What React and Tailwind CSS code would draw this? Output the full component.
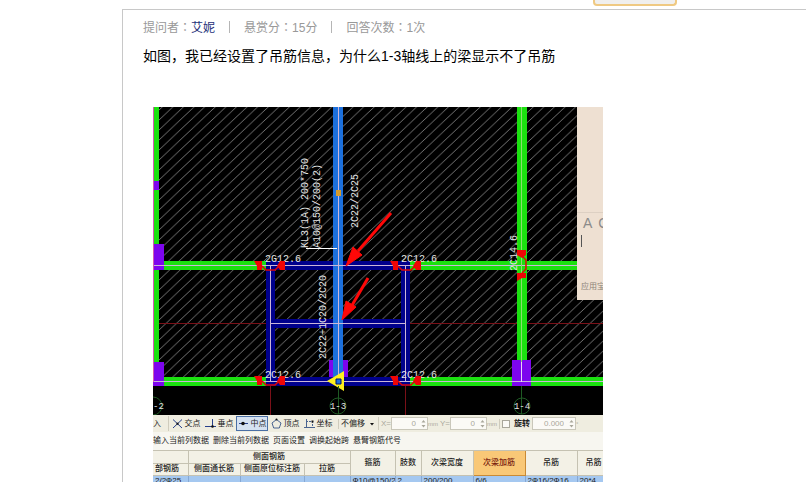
const columns = [
  { name: "箍筋", width: "w-[45px]" },
  { name: "肢数", width: "w-[26px]" },
  { name: "次梁宽度", width: "w-[52px]" },
  { name: "次梁加筋", width: "w-[52px]", active: true },
  { name: "吊筋", width: "w-[52px]" },
  { name: "吊筋", width: "w-[26px]", cut: true },
];

const row = ["2/2Ф25", "", "", "", "Ф10@150/2", "2", "200/200", "6/6", "2Ф16/2Ф16", "20*4"];

const menu = ["输入当前列数据", "删除当前列数据", "页面设置", "调换起始跨", "悬臂钢筋代号"];

const CrossIcon = () => (
  <svg className="size-[11px] shrink-0" viewBox="0 0 11 11" fill="none" stroke="#27408b">
    <path d="M1 1.5 10 10M10 1.5 1 10" />
    <path d="M4.5 5.7h2" stroke="#111" strokeWidth="2" />
  </svg>
);

const PerpIcon = () => (
  <svg className="size-[11px] shrink-0" viewBox="0 0 11 11" fill="none" stroke="#27408b">
    <path d="M0 8.5h11M7.5 1v7" />
    <circle cx="7.5" cy="8.5" r="1.3" fill="#111" stroke="none" />
  </svg>
);

const MidIcon = () => (
  <svg className="size-[11px] shrink-0" viewBox="0 0 11 11" fill="none" stroke="#27408b">
    <path d="M1 5.5h9" />
    <circle cx="5" cy="5.5" r="1.8" fill="#111" stroke="none" />
  </svg>
);

const VertexIcon = () => (
  <svg className="size-[11px] shrink-0" viewBox="0 0 11 11" fill="none" stroke="#4a6490">
    <path d="M5.5 1.5 10 5 8.3 10H2.7L1 5z" />
    <circle cx="5.5" cy="1.5" r="1" fill="#111" stroke="none" />
  </svg>
);

const CoordIcon = () => (
  <svg className="size-[11px] shrink-0" viewBox="0 0 11 11" fill="none" stroke="#4a6490">
    <path d="M2.5 1v9M0 9.5h11" />
    <path d="M2 3.5h6.5V10" strokeDasharray="2 1" />
    <path d="M7.5 3.5h2" stroke="#111" strokeWidth="2" />
  </svg>
);

const snaps = [
  { name: "交点", Icon: CrossIcon },
  { name: "垂点", Icon: PerpIcon },
  { name: "中点", Icon: MidIcon, active: true },
  { name: "顶点", Icon: VertexIcon },
  { name: "坐标", Icon: CoordIcon },
];

// hanging bar mark, drawn around the crossing point of two beams
const Hanger = ({ x, y, rotate = 0 }) => (
  <g transform={`translate(${x} ${y}) rotate(${rotate})`} fill="#f00505">
    <path d="M-16-5h8v9h-5V0z" />
    <path d="M7 0 10-5h5v9h-5z" />
    <path d="M-8 0-4 4H5L9 0" fill="none" stroke="#e00505" strokeWidth="1.5" />
  </g>
);

const Drawing = () => (
  <svg
    className="block w-full"
    viewBox="153 107 450 308"
    fontFamily="'Liberation Mono', monospace"
    fontSize="10"
    fill="#e4e4e4"
    role="img"
    aria-label="梁平面图"
  >
    <defs>
      <pattern id="hatch" width="10.6" height="10" patternUnits="userSpaceOnUse">
        <path d="M0 10 10.6 0M-1.06 1 1.06-1M9.54 11l2.12-2" stroke="#8c8c8c" strokeWidth="0.8" />
      </pattern>
    </defs>
    <path d="M153 107h450v308H153z" fill="#000" />
    <path d="M159 107h444v270H159z" fill="url(#hatch)" />
    <path d="M153 323.5h450M270.5 380v35M405.5 380v35" stroke="#7a1018" />

    {/* green beams */}
    <g fill="#1be010">
      <path d="M153 107h6v279h-6z" />
      <path d="M517 107h10v279h-10z" />
      <path d="M153 261h113v9H153zM410 261h193v9H410z" />
      <path d="M153 377h113v9H153zM410 377h193v9H410z" />
    </g>

    {/* secondary beams */}
    <g fill="#00008c">
      <path d="M266 261h144v9H266zM266 377h144v9H266zM266 319h144v9H266z" />
      <path d="M266 261h9v125h-9zM401 261h9v125h-9z" />
    </g>

    {/* columns */}
    <g fill="#7d05ee">
      <path d="M153 181h6v9h-6zM153 244h11v26h-11zM153 362h11v24h-11z" />
      <path d="M329 360h19v17h-19zM512 360h19v26h-19z" />
    </g>

    <path d="M333 107h10v270h-10z" fill="#1c70dc" />
    <g stroke="#cbb6d8" fill="none">
      <path d="M153 265.5h450M153 381.5h450M270 323.5h136" />
      <path d="M270.5 266v116M405.5 266v116M338.5 107v276" />
      <path d="M521.5 107v275" stroke="#8edb70" />
      <path d="M153.5 107v275" stroke="#d25ab0" />
    </g>
    <path d="M521.5 362v20" stroke="#e9d3f5" />
    <path d="M336 190h5v6h-5z" fill="#d39a2c" />
    <path d="M306 248.5h31" stroke="#fff" />

    <text x="265" y="262">2G12.6</text>
    <text x="401" y="262">2C12.6</text>
    <text x="265" y="378">2C12.6</text>
    <text x="401" y="378">2C12.6</text>
    <text transform="translate(308 248) rotate(-90)">KL3(1A) 200*750</text>
    <text transform="translate(320 248) rotate(-90)">A10@150/200(2)</text>
    <text transform="translate(358 228) rotate(-90)">2C22/2C25</text>
    <text transform="translate(326 359) rotate(-90)">2C22+1C20/2C20</text>
    <text transform="translate(517 271) rotate(-90)">2C14.6</text>

    <Hanger x={270} y={266} />
    <Hanger x={406} y={266} />
    <Hanger x={270} y={381} />
    <Hanger x={406} y={381} />
    <Hanger x={522} y={265} rotate={-90} />

    {/* pointers to the missing hangers */}
    <g fill="#ff0808" stroke="#ff0808">
      <path d="M391 213 358 251" strokeWidth="3" />
      <path d="M346 266 353 247 362 255z" />
      <path d="M368 278 351 307" strokeWidth="3" />
      <path d="M342 320 346 301 356 307z" />
    </g>

    <path d="M327 381 344 371v20z" fill="#fff01e" />
    <path d="M336 379h5v5h-5z" fill="#1c70dc" stroke="#00106b" />

    {/* axis bubbles */}
    <g fill="none" stroke="#1f5a24">
      <circle cx="153" cy="406" r="9" />
      <circle cx="338" cy="406" r="8" />
      <circle cx="522" cy="406" r="8" />
      <path d="M338.5 386v28M521.5 386v28" />
    </g>
    <text x="153" y="409" fontSize="9">-2</text>
    <text x="338" y="409" fontSize="9" textAnchor="middle">1-3</text>
    <text x="522" y="409" fontSize="9" textAnchor="middle">1-4</text>
  </svg>
);

const NumberBox = ({ id, label, value, unit, width }) => (
  <div className="flex items-center">
    <label htmlFor={id}>{label}</label>
    <div className={`flex h-[13px] items-center border border-[#c9c7ba] bg-[#fbfaf6] ${width}`}>
      <input id={id} defaultValue={value} className="w-full min-w-0 bg-transparent pr-1 text-right outline-none" />
      <svg className="h-[11px] w-[7px] shrink-0" viewBox="0 0 7 11" fill="#a9a79b">
        <path d="M3.5 2 5.5 4.5h-4zM3.5 9.5 1.5 7h4z" />
      </svg>
    </div>
    <span className="text-[6px]">{unit}</span>
  </div>
);

const Toolbar = () => (
  <div className="flex h-[17px] items-center overflow-hidden bg-[#efede0] whitespace-nowrap">
    <span className="w-[15px]">入</span>
    <div className="flex gap-px border-l border-[#cfccbd] pl-px">
      {snaps.map(({ name, Icon, active }) => (
        <button
          key={name}
          type="button"
          className={`flex h-[15px] w-8 items-center justify-center gap-0.5 ${
            active ? "border border-[#4a6fa5] bg-[#d5e2f2]" : ""
          }`}
        >
          <Icon />
          {name}
        </button>
      ))}
    </div>
    <div className="relative ml-1 flex w-[38px] items-center border-l border-[#cfccbd]">
      <select aria-label="偏移" className="w-full appearance-none bg-transparent pl-0.5 outline-none">
        <option>不偏移</option>
      </select>
      <svg className="pointer-events-none absolute right-0.5 size-1" viewBox="0 0 4 4">
        <path d="M0 1h4L2 3.5z" fill="#111" />
      </svg>
    </div>
    <div className="ml-0.5 flex gap-0.5 border-l border-[#cfccbd] pl-0.5 text-[#aaa89c]">
      <NumberBox id="offset-x" label="X=" value="0" unit="mm" width="w-[37px]" />
      <NumberBox id="offset-y" label="Y=" value="0" unit="mm" width="w-[37px]" />
    </div>
    <div className="ml-0.5 flex items-center border-l border-[#cfccbd] pl-0.5">
      <input id="rotate" type="checkbox" className="mr-1 size-2 appearance-none border border-[#a9a79b] bg-[#fbfaf6]" />
      <label htmlFor="rotate" className="font-bold">旋转</label>
    </div>
    <div className="ml-0.5 text-[#aaa89c]">
      <NumberBox id="angle" label="" value="0.000" unit="°" width="w-[44px]" />
    </div>
  </div>
);

const BeamTable = () => (
  <table className="w-full table-fixed border-collapse whitespace-nowrap">
    <colgroup>
      <col className="w-[35px]" />
      <col className="w-[52px]" />
      <col className="w-[64px]" />
      <col className="w-[46px]" />
      {columns.map((col, index) => (
        <col key={index} className={col.width} />
      ))}
    </colgroup>
    <thead className="bg-[#f3f1e6]">
      <tr className="h-3">
        <th className="border-r border-b border-[#c5c2b2] p-0" />
        <th colSpan={3} className="border-r border-b border-[#c5c2b2] p-0 font-medium">侧面钢筋</th>
        {columns.map((col, index) => (
          <th
            key={index}
            rowSpan={2}
            className={`overflow-hidden border-b p-0 font-medium ${
              col.active ? "border-[#c98a35] bg-[#f9c877] text-[#7a1c10]" : "border-[#c5c2b2]"
            } ${col.cut ? "pl-2 text-left" : "border-r"}`}
          >
            {col.name}
          </th>
        ))}
      </tr>
      <tr className="h-3">
        <th className="border-r border-b border-[#c5c2b2] p-0 pl-0.5 text-left font-medium">部钢筋</th>
        <th className="border-r border-b border-[#c5c2b2] p-0 font-medium">侧面通长筋</th>
        <th className="border-r border-b border-[#c5c2b2] p-0 font-medium">侧面原位标注筋</th>
        <th className="border-r border-b border-[#c5c2b2] p-0 font-medium">拉筋</th>
      </tr>
    </thead>
    <tbody>
      <tr className="h-3 bg-[#a5c8f0]">
        {row.map((value, index) => (
          <td key={index} className="overflow-hidden border-r border-[#86a8d4] p-0 pl-0.5 last:border-r-0">{value}</td>
        ))}
      </tr>
    </tbody>
  </table>
);

// full-width colon, centred in its box
const Colon = () => <span className="font-['Noto_Sans_CJK_TC',sans-serif]">：</span>;

const App = () => {
  return (
    <div className="h-screen overflow-hidden bg-white font-['Liberation_Sans','Noto_Sans_CJK_SC',sans-serif]">
      <div className="flex h-[9px] justify-end pr-[129px]">
        <button
          type="button"
          aria-label="提交"
          className="h-1.5 w-[84px] rounded-b-sm border-2 border-t-0 border-[#efc983] bg-[#f0efee]"
        />
      </div>

      <main className="ml-[122px] border-t border-l border-[#c8c8c8] pl-5">
        <div className="flex h-[34px] items-center gap-3.5 text-xs leading-4 text-[#999]">
          <p>提问者<Colon /><a href="#user" className="text-[#26317a]">艾妮</a></p>
          <span className="h-3 w-px bg-[#b5b5b5]" />
          <p>悬赏分<Colon />15分</p>
          <span className="h-3 w-px bg-[#b5b5b5]" />
          <p>回答次数<Colon />1次</p>
        </div>
        <h1 className="text-sm leading-6 text-black">如图，我已经设置了吊筋信息，为什么1-3轴线上的梁显示不了吊筋</h1>

        <div className="mt-[39px] ml-2.5 w-[450px] text-[8px] leading-[10px] text-[#222]">
          <div className="relative">
            <Drawing />
            <aside className="absolute top-0 right-0 flex h-[193px] w-[26px] flex-col overflow-hidden bg-[#eee0d2] whitespace-nowrap">
              <div className="mt-[105px] flex gap-1.5 border-t border-[#ddd0c3] pt-1 pl-1.5 text-sm leading-3 text-[#8a8a8a]">
                <span>A</span>
                <span>C</span>
              </div>
              <div className="mt-1.5 ml-1 h-3 w-px bg-[#555]" />
              <p className="mt-auto pb-2 pl-1 text-[#8c8378]">应用宝</p>
            </aside>
          </div>
          <Toolbar />
          <div className="flex h-[19px] items-center gap-1 overflow-hidden border-b border-[#c5c2b2] bg-[#f7f6f0] whitespace-nowrap">
            {menu.map((name) => (
              <button key={name} type="button">{name}</button>
            ))}
          </div>
          <BeamTable />
        </div>
      </main>
    </div>
  );
};

export default App;
